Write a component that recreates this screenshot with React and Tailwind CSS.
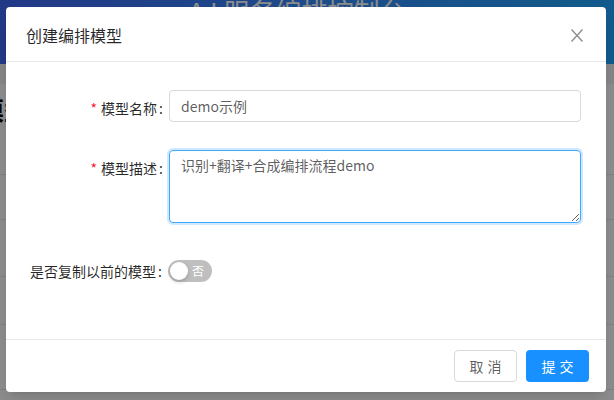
import { useState } from "react";

const font = { fontFamily: '"Noto Sans CJK SC", "Noto Sans", sans-serif' };

const FormLabel = ({ children, required }) => (
    <div className="w-[139px] shrink-0 flex justify-end items-center h-[40px] pr-[6px] text-[14px] text-black/85">
        {required && <span className="text-[#f5222d] mr-[4px] text-[14px] leading-none">*</span>}
        <span>{children}</span>
        <span className="ml-[2px]">:</span>
    </div>
);

const CreateModelModal = () => {
    const [name, setName] = useState("demo示例");
    const [desc, setDesc] = useState("识别+翻译+合成编排流程demo");
    const [copy, setCopy] = useState(false);

    return (
        <div className="w-[600px] h-[385px] bg-white rounded-[4px] flex flex-col shadow-lg">
            {/* header */}
            <div className="h-[55px] shrink-0 flex items-center justify-between pl-[20px] pr-[23px] border-b border-[#e8e8e8]">
                <span className="text-[16px] text-black/85 pt-[2px]">创建编排模型</span>
                <button className="text-black/45 pt-[2px]">
                    <svg width="12" height="13" viewBox="0 0 12 13" fill="none" stroke="currentColor" strokeWidth="1.4">
                        <path d="M0.5 0.5 L11.5 12.5 M11.5 0.5 L0.5 12.5" />
                    </svg>
                </button>
            </div>

            {/* body */}
            <div className="flex-1 pl-[24px] pr-[25px] pt-[26px]">
                <div className="flex items-start">
                    <FormLabel required>模型名称</FormLabel>
                    <div className="flex-1 pt-[2px]">
                        <input
                            value={name}
                            onChange={(e) => setName(e.target.value)}
                            className="w-full h-[32px] px-[11px] border border-[#d9d9d9] rounded-[4px] text-[14px] text-black/65 outline-none"
                        />
                    </div>
                </div>

                <div className="flex items-start mt-[20px]">
                    <FormLabel required>模型描述</FormLabel>
                    <div className="flex-1 pt-[2px]">
                        <textarea
                            value={desc}
                            onChange={(e) => setDesc(e.target.value)}
                            className="block w-full h-[73px] px-[11px] py-[3px] border border-[#40a9ff] rounded-[4px] text-[14px] leading-[22px] text-black/65 outline-none shadow-[0_0_0_2px_rgba(24,144,255,0.2)] resize-y"
                        />
                    </div>
                </div>

                <div className="flex items-center mt-[28px]">
                    <div className="shrink-0 flex items-center h-[40px] pr-[6px] text-[14px] text-black/85">
                        <span>是否复制以前的模型</span>
                        <span className="ml-[2px]">:</span>
                    </div>
                    <button
                        onClick={() => setCopy(!copy)}
                        className={`relative w-[44px] h-[22px] rounded-full flex items-center ${copy ? "bg-[#1890ff]" : "bg-[#bfbfbf]"}`}
                    >
                        <span className={`absolute top-[2px] w-[18px] h-[18px] rounded-full bg-white shadow-[0_2px_4px_rgba(0,35,11,0.2)] ${copy ? "left-[24px]" : "left-[2px]"}`} />
                        <span className={`text-[12px] text-white leading-none ${copy ? "ml-[7px]" : "ml-[24px]"}`}>{copy ? "是" : "否"}</span>
                    </button>
                </div>
            </div>

            {/* footer */}
            <div className="h-[53px] shrink-0 border-t border-[#e8e8e8] flex items-center justify-end gap-[9px] pr-[17px]">
                <button className="w-[63px] h-[32px] rounded-[4px] border border-[#d9d9d9] bg-white text-[14px] text-black/65 tracking-[4px] pl-[4px]">
                    取消
                </button>
                <button className="w-[63px] h-[32px] rounded-[4px] bg-[#1890ff] text-[14px] text-white tracking-[4px] pl-[4px]">
                    提交
                </button>
            </div>
        </div>
    );
};

const App = () => {
    return (
        <div className="relative w-[614px] h-[400px] overflow-hidden bg-white" style={font}>
            {/* page behind the modal */}
            <div className="h-[64px] bg-gradient-to-r from-[#3f68f6] to-[#20a6ff] flex justify-center overflow-hidden">
                <span className="text-[26px] leading-none text-white mt-[-2px] ml-[-20px]">A I 服务编排控制台</span>
            </div>
            <div className="h-[20px] bg-[#f0f2f5]" />
            <div className="flex h-[48px] items-center">
                <span className="ml-[-22px] text-[26px] font-bold text-black">模型</span>
            </div>
            <div className="h-[43px] border-b border-[#e8e8e8]" />
            <div className="h-[45px] border-b border-[#e8e8e8]" />
            <div className="h-[57px] border-b border-[#e8e8e8]" />
            <div className="h-[48px] border-b border-[#e8e8e8]" />
            <div className="h-[65px] border-b border-[#e8e8e8]" />

            {/* mask + modal */}
            <div className="absolute inset-0 bg-black/45 pl-[6px] pt-[7px]">
                <CreateModelModal />
            </div>
        </div>
    );
};

export default App;
